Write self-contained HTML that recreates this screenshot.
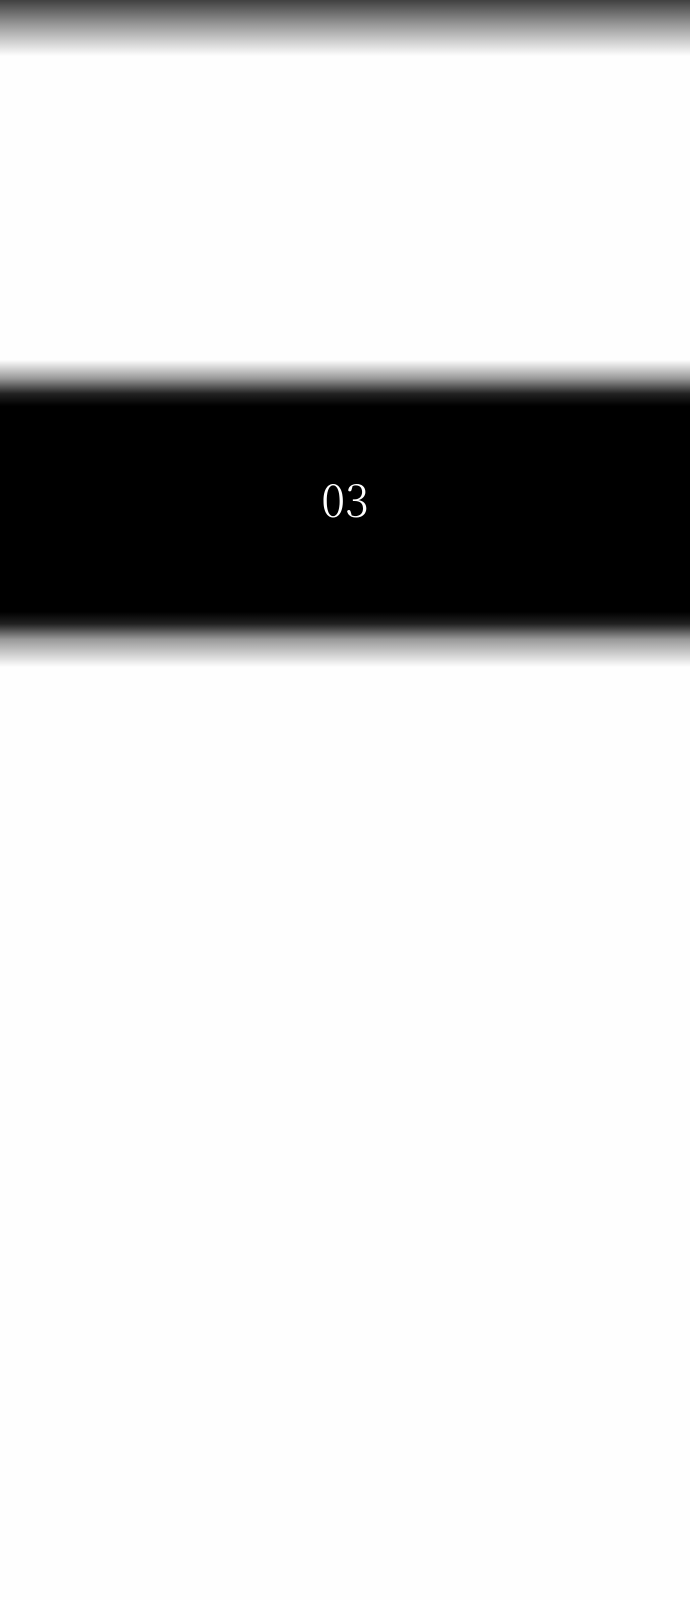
<!DOCTYPE html>
<html><head><meta charset="utf-8"><style>
html,body{margin:0;padding:0;width:690px;height:1600px;background:#fefefe;overflow:hidden;position:relative}
.top{position:absolute;left:0;top:0;width:690px;height:56px;background:linear-gradient(#404040,#9a9a9a 45%,#fefefe)}
.band{position:absolute;left:0;top:360px;width:690px;height:307px;background:linear-gradient(#fefefe 0,#999 6%,#222 11%,#000 15%,#000 82%,#222 86%,#999 91%,#fefefe 100%)}
.num{position:absolute;left:0;width:690px;top:472px;text-align:center;color:#fff;font-family:"Noto Serif CJK SC","Liberation Serif",serif;font-size:44px;line-height:50px;font-weight:300;transform:scaleY(1.05)}
</style></head><body>
<div class="top"></div>
<div class="band"></div>
<div class="num">03</div>
</body></html>
